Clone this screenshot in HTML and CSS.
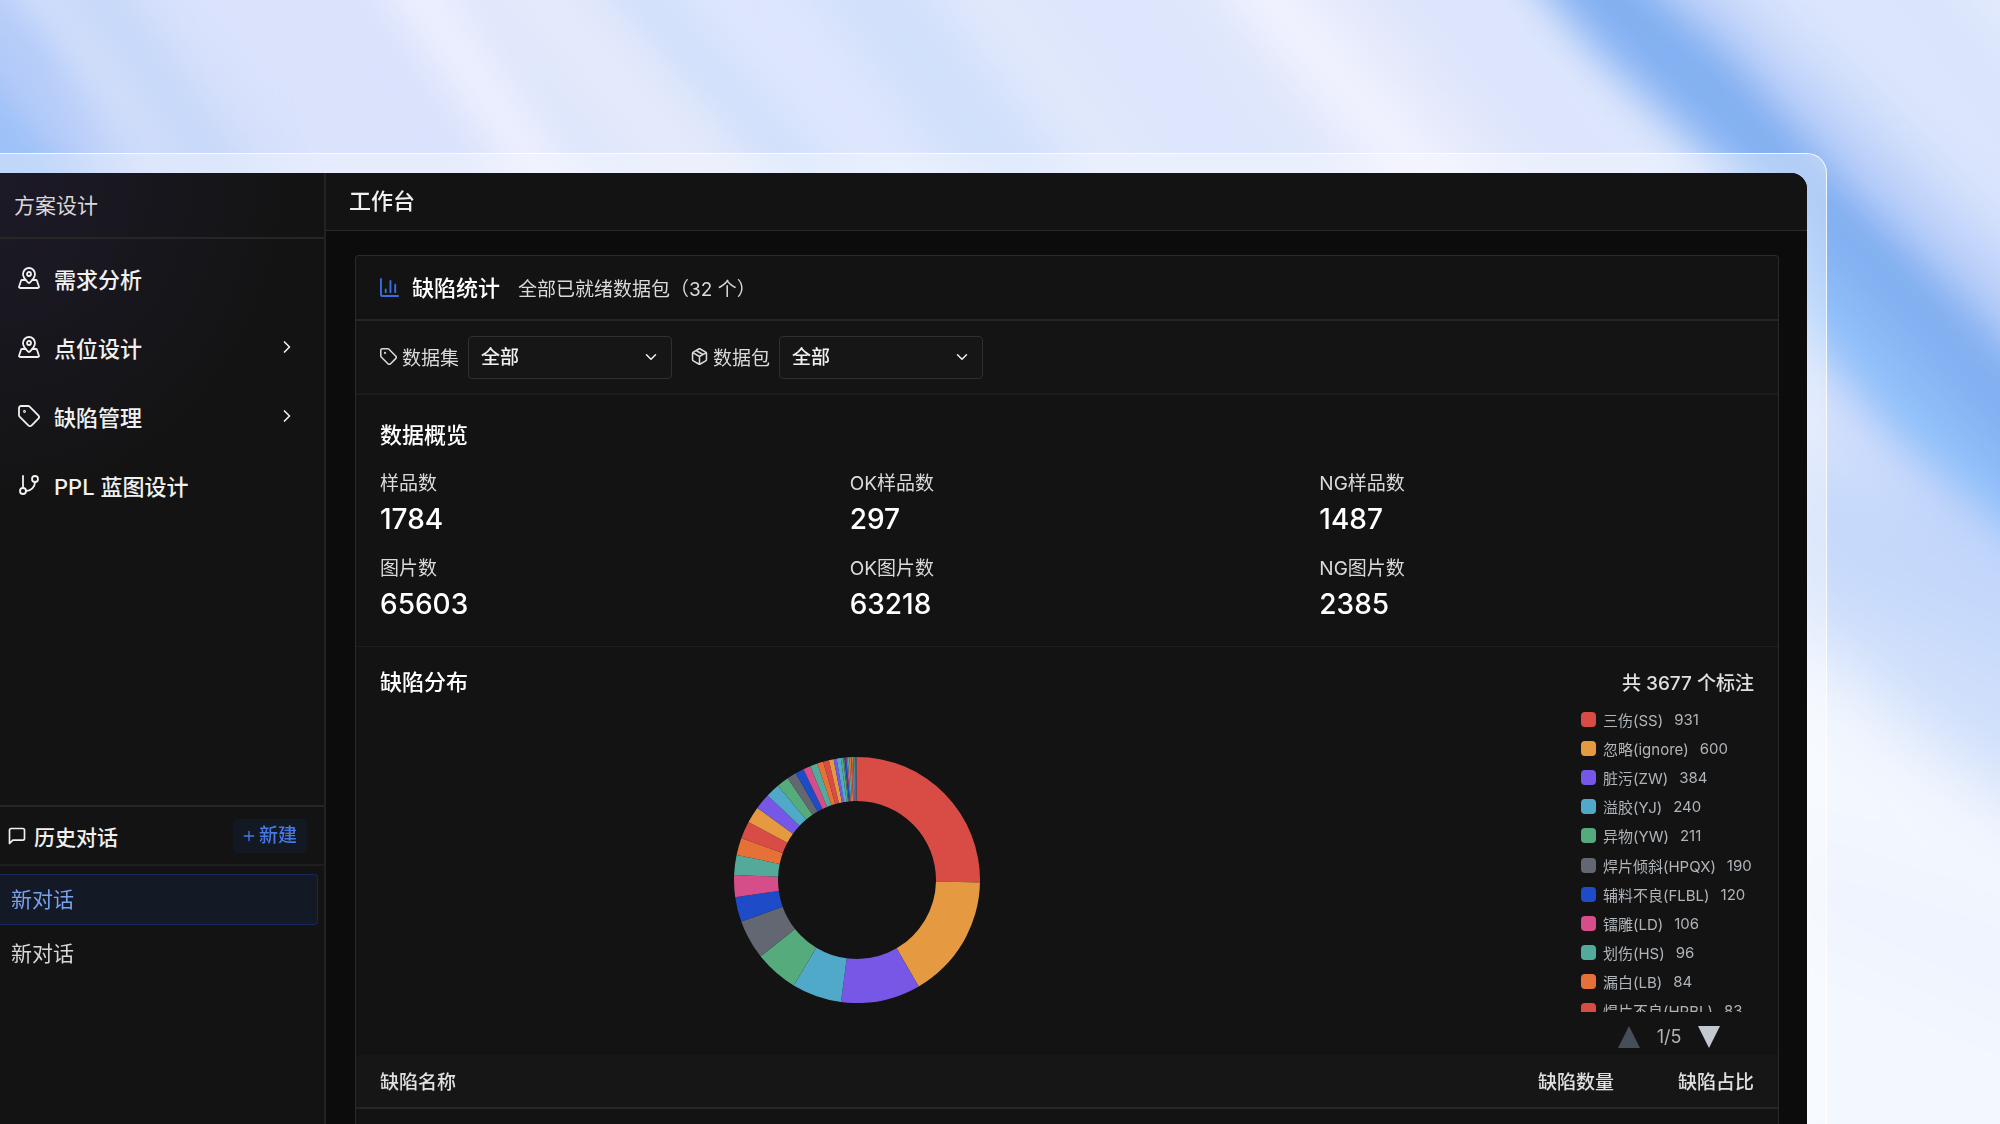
FILE: index.html
```html
<!DOCTYPE html>
<html lang="zh-CN">
<head>
<meta charset="utf-8">
<meta name="viewport" content="width=device-width, initial-scale=1">
<title>工作台</title>
<link rel="stylesheet" href="styles.css">
</head>
<body>
<svg class="backdrop" viewBox="0 0 2000 1124" preserveAspectRatio="xMaxYMin slice" aria-hidden="true">
  <defs>
    <filter id="soft" x="-50%" y="-50%" width="200%" height="200%"><feGaussianBlur stdDeviation="20"/></filter>
    <filter id="wide" x="-50%" y="-50%" width="200%" height="200%"><feGaussianBlur stdDeviation="34"/></filter>
  </defs>
  <rect width="2000" height="1124" fill="#dde6fc"/>
  <g filter="url(#wide)">
    <path d="M-100-100H60L360 300H-100z" fill="#c9d9f9"/>
    <path d="M120-60H400L620 240H300z" fill="#dae2fc"/>
    <path d="M1300-100L1440 60L1620 260H1400L1150-100z" fill="#e6eafc"/>
    <path d="M1640-100L2100 340V700L1780 330V100z" fill="#bcd2fa"/>
    <path d="M1830-100L2100 250V-100z" fill="#d6e2fb"/>
    <path d="M1900-100L2100 150V-100z" fill="#e8eefd"/>
    <path d="M1780 430L2100 600V840L1780 640z" fill="#c4d8fb"/>
    <path d="M1780 560L2100 700V830L1780 670z" fill="#cfdffb"/>
    <path d="M1500 640H1800L2100 880V1300H1500z" fill="#f3f7fe"/>
    <path d="M1780 850L2100 960V1040L1780 900z" fill="#edf2fe"/>
  </g>
  <g filter="url(#soft)" fill="none">
    <path d="M-70-30L70 220" stroke="#9cc1f8" stroke-width="130"/>
    <path d="M-50-20L140 230" stroke="#bfd0f9" stroke-width="34"/>
    <path d="M10-30L240 230" stroke="#d3dffb" stroke-width="42"/>
    <path d="M60-60L250 230" stroke="#c5d7f8" stroke-width="34"/>
    <path d="M370-80L620 290" stroke="#edf0fe" stroke-width="54"/>
    <path d="M480-80L800 300" stroke="#e4e9fb" stroke-width="90"/>
    <path d="M590-60L860 240" stroke="#cfdffb" stroke-width="46"/>
    <path d="M830-60L1060 240" stroke="#d1e0fb" stroke-width="90"/>
    <path d="M950-60L1180 240" stroke="#e1e8fc" stroke-width="50"/>
    <path d="M1220-60L1480 240" stroke="#f1f3fe" stroke-width="50"/>
    <path d="M1380-60L1600 200" stroke="#dde4fc" stroke-width="50"/>
    <path d="M1840 270L1940 390L2080 510" stroke="#8ebffa" stroke-width="120"/>
    <path d="M1570-50L1630 20L1763 145L1873 263L2060 460" stroke="#8ab5f4" stroke-width="96"/>
    <path d="M1560-50L1620 10L1763 130L1873 258L2060 460" stroke="#80aef0" stroke-width="44"/>
    <path d="M1670-60L1760 60L1860 170L2060 360" stroke="#bed2fa" stroke-width="30"/>
  </g>
</svg>

<div class="frame">
  <div class="window">
    <aside class="sidebar">
      <h2 class="sidebar-title">方案设计</h2>
      <nav class="nav">
        <a class="nav-item" href="#requirements">
          <svg class="nav-icon" viewBox="0 0 24 24"><path d="M18 8c0 3.613-3.869 7.429-5.393 8.795a1 1 0 0 1-1.214 0C9.87 15.429 6 11.613 6 8a6 6 0 0 1 12 0"/><circle cx="12" cy="8" r="2"/><path d="M8.714 14h-3.71a1 1 0 0 0-.948.683l-2.004 6A1 1 0 0 0 3 22h18a1 1 0 0 0 .948-1.316l-2-6a1 1 0 0 0-.949-.684h-3.712"/></svg>
          <span>需求分析</span>
        </a>
        <a class="nav-item" href="#points">
          <svg class="nav-icon" viewBox="0 0 24 24"><path d="M18 8c0 3.613-3.869 7.429-5.393 8.795a1 1 0 0 1-1.214 0C9.87 15.429 6 11.613 6 8a6 6 0 0 1 12 0"/><circle cx="12" cy="8" r="2"/><path d="M8.714 14h-3.71a1 1 0 0 0-.948.683l-2.004 6A1 1 0 0 0 3 22h18a1 1 0 0 0 .948-1.316l-2-6a1 1 0 0 0-.949-.684h-3.712"/></svg>
          <span>点位设计</span>
          <svg class="nav-arrow" viewBox="0 0 24 24"><path d="m9 18 6-6-6-6"/></svg>
        </a>
        <a class="nav-item" href="#defects">
          <svg class="nav-icon" viewBox="0 0 24 24"><path d="M12.586 2.586A2 2 0 0 0 11.172 2H4a2 2 0 0 0-2 2v7.172a2 2 0 0 0 .586 1.414l8.704 8.704a2.426 2.426 0 0 0 3.42 0l6.58-6.58a2.426 2.426 0 0 0 0-3.42z"/><circle cx="7.5" cy="7.5" r=".5"/></svg>
          <span>缺陷管理</span>
          <svg class="nav-arrow" viewBox="0 0 24 24"><path d="m9 18 6-6-6-6"/></svg>
        </a>
        <a class="nav-item" href="#ppl">
          <svg class="nav-icon" viewBox="0 0 24 24"><path d="M6 3v12"/><circle cx="18" cy="6" r="3"/><circle cx="6" cy="18" r="3"/><path d="M18 9a9 9 0 0 1-9 9"/></svg>
          <span>PPL 蓝图设计</span>
        </a>
      </nav>
      <section class="history">
        <header class="history-head">
          <svg class="history-icon" viewBox="0 0 24 24"><path d="M21 15a2 2 0 0 1-2 2H7l-4 4V5a2 2 0 0 1 2-2h14a2 2 0 0 1 2 2z"/></svg>
          <h3 class="history-title">历史对话</h3>
          <button class="new-button" type="button">
            <svg class="plus" viewBox="0 0 24 24"><path d="M5 12h14M12 5v14"/></svg>新建
          </button>
        </header>
        <div class="history-list">
          <a class="chat chat-active" href="#chat-1">新对话</a>
          <a class="chat" href="#chat-2">新对话</a>
        </div>
      </section>
    </aside>

    <main class="main">
      <header class="topbar"><h1 class="topbar-title">工作台</h1></header>
      <div class="content">
        <section class="panel">
          <header class="panel-head">
            <svg class="panel-icon" viewBox="2 2 20 20"><path d="M3 3v16a2 2 0 0 0 2 2h16M18 17V9M13 17V5M8 17v-3"/></svg>
            <h2 class="heading">缺陷统计</h2>
            <span class="panel-note">全部已就绪数据包（32 个）</span>
          </header>

          <form class="filters">
            <div class="filter">
              <label class="filter-label" for="dataset">
                <svg class="filter-icon" viewBox="1 1 22 22"><path d="M12.586 2.586A2 2 0 0 0 11.172 2H4a2 2 0 0 0-2 2v7.172a2 2 0 0 0 .586 1.414l8.704 8.704a2.426 2.426 0 0 0 3.42 0l6.58-6.58a2.426 2.426 0 0 0 0-3.42z"/><circle cx="7.5" cy="7.5" r=".5"/></svg>
                数据集
              </label>
              <div class="select-box">
                <select class="select" id="dataset"><option>全部</option></select>
                <svg class="select-arrow" viewBox="0 0 24 24"><path d="m6 9 6 6 6-6"/></svg>
              </div>
            </div>
            <div class="filter">
              <label class="filter-label" for="package">
                <svg class="filter-icon" viewBox="1 1 22 22"><path d="M11 21.73a2 2 0 0 0 2 0l7-4A2 2 0 0 0 21 16V8a2 2 0 0 0-1-1.73l-7-4a2 2 0 0 0-2 0l-7 4A2 2 0 0 0 3 8v8a2 2 0 0 0 1 1.73zM12 22V12M3.29 7 12 12l8.71-5M7.5 4.27l9 5.15"/></svg>
                数据包
              </label>
              <div class="select-box">
                <select class="select" id="package"><option>全部</option></select>
                <svg class="select-arrow" viewBox="0 0 24 24"><path d="m6 9 6 6 6-6"/></svg>
              </div>
            </div>
          </form>

          <section class="overview">
            <h3 class="heading">数据概览</h3>
            <dl class="stats">
              <div><dt>样品数</dt><dd>1784</dd></div>
              <div><dt>OK样品数</dt><dd>297</dd></div>
              <div><dt>NG样品数</dt><dd>1487</dd></div>
              <div><dt>图片数</dt><dd>65603</dd></div>
              <div><dt>OK图片数</dt><dd>63218</dd></div>
              <div><dt>NG图片数</dt><dd>2385</dd></div>
            </dl>
          </section>

          <section class="distribution">
            <header class="distribution-head">
              <h3 class="heading">缺陷分布</h3>
              <span class="total">共 3677 个标注</span>
            </header>
            <div class="chart">
              <svg class="donut" id="donut" viewBox="-123 -123 246 246" role="img" aria-label="缺陷分布"></svg>
              <div class="legend">
                <div class="legend-view">
                  <ul class="legend-list">
                    <li><i class="swatch red"></i>三伤(SS)<span>931</span></li>
                    <li><i class="swatch amber"></i>忽略(ignore)<span>600</span></li>
                    <li><i class="swatch purple"></i>脏污(ZW)<span>384</span></li>
                    <li><i class="swatch cyan"></i>溢胶(YJ)<span>240</span></li>
                    <li><i class="swatch green"></i>异物(YW)<span>211</span></li>
                    <li><i class="swatch gray"></i>焊片倾斜(HPQX)<span>190</span></li>
                    <li><i class="swatch blue"></i>辅料不良(FLBL)<span>120</span></li>
                    <li><i class="swatch pink"></i>镭雕(LD)<span>106</span></li>
                    <li><i class="swatch teal"></i>划伤(HS)<span>96</span></li>
                    <li><i class="swatch orange"></i>漏白(LB)<span>84</span></li>
                    <li><i class="swatch red"></i>焊片不良(HPBL)<span>83</span></li>
                  </ul>
                </div>
                <div class="pager">
                  <button class="page-button" type="button" aria-label="上一页" disabled><svg viewBox="0 0 22 22"><path d="M11 0 22 22H0z"/></svg></button>
                  <span>1/5</span>
                  <button class="page-button" type="button" aria-label="下一页"><svg viewBox="0 0 22 22"><path d="M0 0h22L11 22z"/></svg></button>
                </div>
              </div>
            </div>
          </section>

          <table class="table">
            <thead>
              <tr><th scope="col">缺陷名称</th><th scope="col" class="num">缺陷数量</th><th scope="col" class="num">缺陷占比</th></tr>
            </thead>
          </table>
        </section>
      </div>
    </main>
  </div>
</div>
<script src="chart.js"></script>
</body>
</html>
```

FILE: styles.css
```css
:root {
  --red: #d94c45;
  --amber: #e59a42;
  --purple: #7657e6;
  --cyan: #51a9c9;
  --green: #55ab7c;
  --gray: #626772;
  --blue: #1e4bc8;
  --pink: #d54d89;
  --teal: #53aa9b;
  --orange: #e57139;
  --surface: #131313;
  --line: #2a2a2a;
  --line-soft: #1c1c1c;
}

* { box-sizing: border-box; }

body {
  margin: 0;
  height: 100vh;
  overflow: hidden;
  display: flex;
  padding: 153px 173px 0 0;
  font-family: Inter, "Noto Sans CJK SC", sans-serif;
  color: #f0f0f0;
}

h1, h2, h3, dl, dd, ul { margin: 0; padding: 0; }

svg {
  display: block;
  flex: none;
  fill: none;
  stroke: currentColor;
  stroke-width: 2;
  stroke-linecap: round;
  stroke-linejoin: round;
}

.backdrop {
  position: fixed;
  inset: 0;
  z-index: -1;
  width: 100%;
  height: 100%;
  stroke: none;
}

.frame {
  flex: 1;
  min-width: 0;
  display: flex;
  padding: 19px 19px 0 0;
  border: solid rgba(255, 255, 255, .8);
  border-width: 1px 1px 0 0;
  border-radius: 0 20px 0 0;
  background: rgba(255, 255, 255, .35);
  backdrop-filter: blur(24px);
}

.window {
  flex: 1;
  min-width: 0;
  display: grid;
  grid-template-columns: 326px 1fr;
  overflow: hidden;
  border-radius: 0 16px 0 0;
  background: #0c0c0c;
}

.sidebar {
  display: flex;
  flex-direction: column;
  min-height: 0;
  border-right: 2px solid #222;
  background: radial-gradient(ellipse 300px 340px at 0 0, #1d1a28, var(--surface)) no-repeat var(--surface);
}

.sidebar-title {
  height: 66px;
  padding-left: 14px;
  border-bottom: 2px solid #262626;
  font-size: 21px;
  font-weight: 400;
  line-height: 66px;
  color: #d8d8da;
}

.nav {
  flex: 1;
  padding-top: 8px;
}

.nav-item {
  display: flex;
  align-items: center;
  gap: 13px;
  height: 69px;
  padding: 0 27px 7px 17px;
  font-size: 22px;
  font-weight: 500;
  color: inherit;
  text-decoration: none;
}

.nav-icon {
  width: 24px;
  height: 24px;
  stroke-width: 1.8;
}

.nav-arrow {
  width: 20px;
  height: 20px;
  margin-left: auto;
}

.history {
  height: 319px;
  border-top: 2px solid #262626;
}

.history-head {
  display: flex;
  align-items: center;
  height: 59px;
  padding: 0 17px 0 7px;
  border-bottom: 2px solid #1e1e1e;
}

.history-icon {
  width: 20px;
  height: 20px;
  margin-right: 7px;
}

.history-title {
  flex: 1;
  font-size: 21px;
  font-weight: 500;
}

.new-button {
  display: flex;
  align-items: center;
  gap: 2px;
  height: 34px;
  padding: 0 10px 0 8px;
  border: 0;
  border-radius: 4px;
  background: #131923;
  font: 500 19px/34px Inter, "Noto Sans CJK SC", sans-serif;
  color: #4678e6;
}

.plus {
  width: 16px;
  height: 16px;
}

.history-list {
  display: grid;
  gap: 3px;
  padding: 8px 6px 0 0;
}

.chat {
  height: 51px;
  padding-left: 11px;
  border: solid transparent;
  border-width: 1px 1px 1px 0;
  border-radius: 0 4px 4px 0;
  font-size: 21px;
  line-height: 49px;
  color: #d8d8d8;
  text-decoration: none;
}

.chat-active {
  border-color: #16295a;
  background: #141a25;
  color: #79a1f0;
}

.main {
  display: flex;
  flex-direction: column;
  min-width: 0;
  min-height: 0;
}

.topbar {
  height: 58px;
  padding-left: 23px;
  border-bottom: 1px solid var(--line);
  background: var(--surface);
}

.topbar-title {
  font-size: 22px;
  font-weight: 500;
  line-height: 57px;
}

.content {
  flex: 1;
  display: flex;
  min-height: 0;
  padding: 24px 28px 0 29px;
}

.panel {
  flex: 1;
  min-width: 0;
  border: 1px solid var(--line);
  border-bottom: 0;
  border-radius: 4px 4px 0 0;
  background: var(--surface);
}

.heading {
  font-size: 22px;
  font-weight: 500;
  line-height: 32px;
  color: #fff;
}

.panel-head {
  display: flex;
  align-items: center;
  height: 65px;
  padding: 0 24px;
  border-bottom: 2px solid #262626;
}

.panel-icon {
  width: 19px;
  height: 19px;
  margin-right: 13px;
  color: #3a6de0;
}

.panel-note {
  margin-left: 18px;
  font-size: 19px;
  color: #dadada;
}

.filters {
  display: flex;
  align-items: center;
  gap: 19px;
  height: 74px;
  padding: 0 24px;
  border-bottom: 2px solid var(--line-soft);
  background: #141414;
}

.filter {
  display: flex;
  align-items: center;
  gap: 9px;
}

.filter-label {
  display: flex;
  align-items: center;
  gap: 5px;
  padding-bottom: 2px;
  font-size: 19px;
  color: #dadada;
}

.filter-icon {
  width: 17px;
  height: 17px;
}

.select-box {
  display: grid;
  align-items: center;
  width: 204px;
}

.select {
  grid-area: 1 / 1;
  height: 43px;
  padding: 0 12px;
  appearance: none;
  border: 1px solid #2f2f2f;
  border-radius: 4px;
  background: #161616;
  font: 500 19px Inter, "Noto Sans CJK SC", sans-serif;
  color: #f0f0f0;
}

.select-arrow {
  grid-area: 1 / 1;
  justify-self: end;
  width: 18px;
  height: 18px;
  margin-right: 12px;
  pointer-events: none;
}

.overview {
  padding: 24px 24px 22px;
  border-bottom: 1px solid #1e1e1e;
}

.stats {
  display: grid;
  grid-template-columns: repeat(3, 1fr);
  gap: 15px 35px;
  margin-top: 18px;
}

.stats dt {
  font-size: 19px;
  line-height: 30px;
  color: #dadada;
}

.stats dd {
  font-size: 28px;
  font-weight: 500;
  line-height: 40px;
  color: #fff;
}

.distribution { padding: 19px 24px 0; }

.distribution-head {
  display: flex;
  align-items: center;
  justify-content: space-between;
}

.total {
  padding-bottom: 2px;
  font-size: 19px;
  font-weight: 500;
  color: #e0e0e0;
}

.chart {
  display: grid;
  grid-template-columns: 954fr 420fr;
  height: 357px;
  padding-top: 7px;
}

.donut {
  place-self: center;
  width: 246px;
  height: 246px;
  stroke: none;
}

.legend {
  justify-self: end;
  width: 173px;
}

.legend-view {
  height: 307px;
  overflow: hidden;
}

.legend-list {
  display: flex;
  flex-direction: column;
  height: 320px;
  list-style: none;
  font-size: 15px;
  color: #b0b5ba;
}

.legend-list li {
  flex: 1;
  display: flex;
  align-items: center;
  white-space: nowrap;
}

.legend-list span { margin-left: 11px; }

.swatch {
  width: 15px;
  height: 15px;
  margin-right: 7px;
  border-radius: 4px;
}

.red { background: var(--red); }
.amber { background: var(--amber); }
.purple { background: var(--purple); }
.cyan { background: var(--cyan); }
.green { background: var(--green); }
.gray { background: var(--gray); }
.blue { background: var(--blue); }
.pink { background: var(--pink); }
.teal { background: var(--teal); }
.orange { background: var(--orange); }

.pager {
  display: flex;
  align-items: center;
  justify-content: center;
  gap: 17px;
  margin-top: 14px;
  padding-left: 3px;
  font-size: 18px;
  line-height: 22px;
  color: #b0b5ba;
}

.page-button {
  padding: 0;
  border: 0;
  background: none;
  color: #c3c9d1;
}

.page-button:disabled { color: #464e5a; }

.page-button svg {
  width: 22px;
  height: 22px;
  fill: currentColor;
  stroke: none;
}

.table {
  width: 100%;
  border-collapse: separate;
  border-spacing: 0;
  background: #161616;
}

.table th {
  height: 54px;
  padding: 0 24px 2px;
  border-bottom: 2px solid #262626;
  font-size: 19px;
  font-weight: 500;
  text-align: left;
  color: #e0e0e0;
}

.table .num {
  width: 140px;
  text-align: right;
}
```

FILE: chart.js
```js
// Annotation counts per defect, largest first; colours repeat every ten slices.
const counts = [
  931, 600, 384, 240, 211, 190, 120, 106, 96, 84,
  83, 79, 77, 67, 59, 45, 41, 36, 36, 29,
  28, 23, 15, 20, 11, 7, 8, 6, 9, 8,
  5, 4, 3, 4, 4, 3, 2, 1, 1, 1
];
const palette = ["red", "amber", "purple", "cyan", "green", "gray", "blue", "pink", "teal", "orange"];
const OUTER = 123;
const INNER = 79;
const total = counts.reduce((sum, n) => sum + n, 0);
const point = (radius, share) => {
  const angle = share * 2 * Math.PI;
  return `${(radius * Math.sin(angle)).toFixed(2)} ${(-radius * Math.cos(angle)).toFixed(2)}`;
};

const donut = document.getElementById("donut");
let passed = 0;
counts.forEach((count, i) => {
  const from = passed / total;
  passed += count;
  const to = passed / total;
  const slice = document.createElementNS("http://www.w3.org/2000/svg", "path");
  slice.setAttribute("d",
    `M${point(OUTER, from)}A${OUTER} ${OUTER} 0 0 1 ${point(OUTER, to)}` +
    `L${point(INNER, to)}A${INNER} ${INNER} 0 0 0 ${point(INNER, from)}Z`);
  slice.setAttribute("fill", `var(--${palette[i % palette.length]})`);
  donut.append(slice);
});
```
